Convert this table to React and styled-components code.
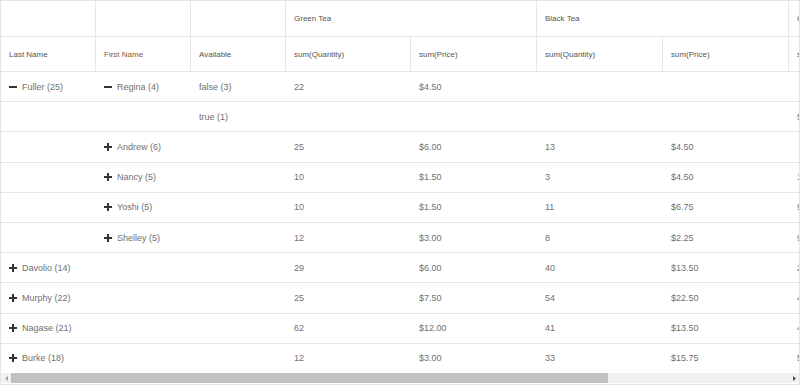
import styled, { createGlobalStyle } from 'styled-components';

const GlobalStyle = createGlobalStyle`
  html, body {
    margin: 0;
    padding: 0;
    background: #fff;
  }
  body {
    font-family: "Liberation Sans", Arial, sans-serif;
  }
`;

const columns = '95px 95px 95px 125px 126px 126px 126px 126px 126px';

const rows = [
  { last: { text: 'Fuller (25)', icon: 'minus' }, first: { text: 'Regina (4)', icon: 'minus' }, avail: 'false (3)', values: ['22', '$4.50', '', '', '', ''] },
  { avail: 'true (1)', values: ['', '', '', '', '5', ''] },
  { first: { text: 'Andrew (6)', icon: 'plus' }, values: ['25', '$6.00', '13', '$4.50', '', ''] },
  { first: { text: 'Nancy (5)', icon: 'plus' }, values: ['10', '$1.50', '3', '$4.50', '17', ''] },
  { first: { text: 'Yoshi (5)', icon: 'plus' }, values: ['10', '$1.50', '11', '$6.75', '9', ''] },
  { first: { text: 'Shelley (5)', icon: 'plus' }, values: ['12', '$3.00', '8', '$2.25', '9', ''] },
  { last: { text: 'Davolio (14)', icon: 'plus' }, values: ['29', '$6.00', '40', '$13.50', '21', ''] },
  { last: { text: 'Murphy (22)', icon: 'plus' }, values: ['25', '$7.50', '54', '$22.50', '42', ''] },
  { last: { text: 'Nagase (21)', icon: 'plus' }, values: ['62', '$12.00', '41', '$13.50', '44', ''] },
  { last: { text: 'Burke (18)', icon: 'plus' }, values: ['12', '$3.00', '33', '$15.75', '50', ''] },
];

function ToggleIcon({ type }) {
  return (
    <svg width="8" height="8" viewBox="0 0 8 8">
      <rect x="0" y="3" width="8" height="2" fill="#333" />
      {type === 'plus' && <rect x="3" y="0" width="2" height="8" fill="#333" />}
    </svg>
  );
}

function GroupCell({ item }) {
  if (!item) return <Cell />;
  return (
    <Cell>
      <ToggleIcon type={item.icon} />
      <span>{item.text}</span>
    </Cell>
  );
}

function App() {
  return (
    <>
      <GlobalStyle />
      <Grid>
        <Viewport>
          <Header>
            <HeadCell />
            <HeadCell />
            <HeadCell />
            <HeadCell $span={2}>Green Tea</HeadCell>
            <HeadCell $span={2}>Black Tea</HeadCell>
            <HeadCell $span={2}>Coffee</HeadCell>
            <HeadCell>Last Name</HeadCell>
            <HeadCell $accent>First Name</HeadCell>
            <HeadCell>Available</HeadCell>
            <HeadCell>sum(Quantity)</HeadCell>
            <HeadCell>sum(Price)</HeadCell>
            <HeadCell>sum(Quantity)</HeadCell>
            <HeadCell>sum(Price)</HeadCell>
            <HeadCell>sum(Quantity)</HeadCell>
            <HeadCell>sum(Price)</HeadCell>
          </Header>
          {rows.map((row, i) => (
            <Row key={i}>
              <GroupCell item={row.last} />
              <GroupCell item={row.first} />
              <Cell>{row.avail}</Cell>
              {row.values.map((v, j) => (
                <Cell key={j}>{v}</Cell>
              ))}
            </Row>
          ))}
        </Viewport>
        <ScrollBar>
          <Arrow>
            <svg width="3" height="5" viewBox="0 0 3 5"><path d="M3 0 L0 2.5 L3 5 Z" fill="#a3a3a3" /></svg>
          </Arrow>
          <Track>
            <Thumb />
          </Track>
          <Arrow>
            <svg width="3" height="5" viewBox="0 0 3 5"><path d="M0 0 L3 2.5 L0 5 Z" fill="#505050" /></svg>
          </Arrow>
        </ScrollBar>
      </Grid>
    </>
  );
}

const Grid = styled.div`
  width: 800px;
  height: 385px;
  box-sizing: border-box;
  border: 1px solid #e4e4e4;
  display: flex;
  flex-direction: column;
  overflow: hidden;
`;

const Viewport = styled.div`
  flex: 1;
  overflow: hidden;
`;

const Header = styled.div`
  display: grid;
  grid-template-columns: ${columns};
  grid-template-rows: 36px 35px;
  width: max-content;
`;

const HeadCell = styled.div`
  grid-column: span ${p => p.$span || 1};
  display: flex;
  align-items: center;
  padding: 0 8px;
  box-sizing: border-box;
  border-right: 1px solid #e6e6e6;
  border-bottom: 1px solid #e6e6e6;
  font-size: 8px;
  color: ${p => (p.$accent ? '#8b5a35' : '#555')};
  white-space: nowrap;
  overflow: hidden;
`;

const Row = styled.div`
  display: grid;
  grid-template-columns: ${columns};
  height: 30.2px;
  width: max-content;
  box-sizing: border-box;
  border-bottom: 1px solid #e6e6e6;
`;

const Cell = styled.div`
  display: flex;
  align-items: center;
  gap: 5px;
  padding: 0 8px;
  font-size: 9px;
  color: #707070;
  white-space: nowrap;
  overflow: hidden;
`;

const ScrollBar = styled.div`
  display: flex;
  height: 10px;
  background: #f1f1f1;
  flex-shrink: 0;
  margin-bottom: 1px;
`;

const Arrow = styled.div`
  width: 10px;
  display: flex;
  align-items: center;
  justify-content: center;
`;

const Track = styled.div`
  flex: 1;
  display: flex;
`;

const Thumb = styled.div`
  width: 597px;
  background: #c1c1c1;
`;

export default App;
